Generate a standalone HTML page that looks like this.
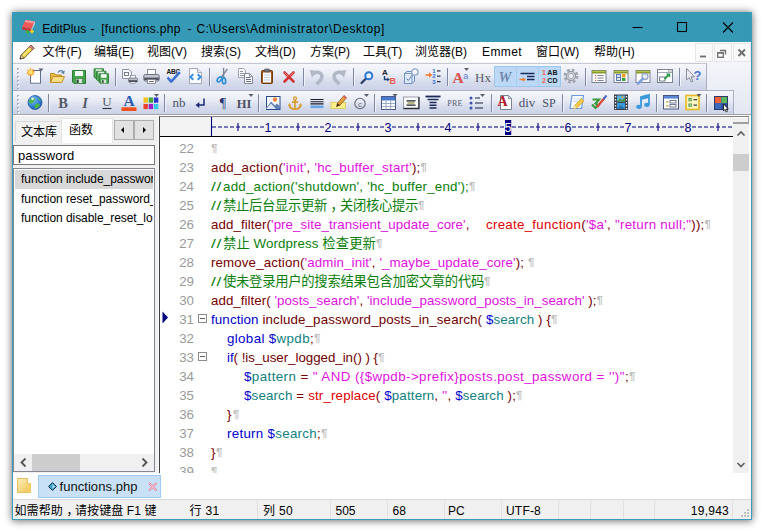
<!DOCTYPE html>
<html lang="zh-CN"><head><meta charset="utf-8"><title>EditPlus</title>
<style>
*{box-sizing:border-box;margin:0;padding:0}
html,body{width:764px;height:532px;overflow:hidden;background:#fff}
body{position:relative;font-family:"Liberation Sans","Noto Sans CJK SC",sans-serif;font-size:12px;color:#000}
.abs{position:absolute}
svg{position:absolute;overflow:visible}
#win{position:absolute;left:12px;top:12px;width:740px;height:508px;background:#f0f0f0;box-shadow:0 0 8px 0 rgba(0,0,0,.46),0 2px 7px rgba(0,0,0,.2)}
#frame{position:absolute;left:0;top:0;width:740px;height:508px;border:1px solid #3a9cb8;border-top:none;pointer-events:none}
#title{position:absolute;left:0;top:0;width:740px;height:30px;background:#369ab6}
#title .t{position:absolute;top:7.600px;font-size:12px;line-height:18px;white-space:pre;color:#000}
#menu{position:absolute;left:1px;top:30px;width:738px;height:20px;background:#fff}
#menu span{position:absolute;top:1px;line-height:18px;font-size:12px;white-space:pre}
.mdi{position:absolute;top:1px;width:18px;height:19px;background:#f9f9f9;border:1px solid #e6e6e6}
#rebar{position:absolute;left:1px;top:50px;width:738px;height:54px;background:linear-gradient(#f4f5fa,#e4e7f2);border-bottom:1px solid #fff}
#rebar:after{content:"";position:absolute;left:0;bottom:0;width:738px;height:1px;background:#a3a3a3}
.tb{position:absolute;left:1px;background:linear-gradient(#f6f7fb,#e9ecf5 40%,#d6dbec 70%,#ccd3e7)}
#tb1{top:51px;height:27px;width:694px;border-top:1px solid #c5c8d2;border-right:1px solid #a9afc4}
#tb2{top:78px;height:24px;width:721px;border-top:1px solid #aab1c8;border-right:1px solid #a9afc4}
.sep{position:absolute;width:2px;border-left:1px solid #7f89a4;border-right:1px solid #f1f3f9}
#left{position:absolute;left:1px;top:104px;width:145px;height:357px;background:#f0f0f0}
#editor{position:absolute;left:147px;top:104px;width:590px;height:357px;background:#fff;overflow:hidden}
#editor{border-left:1px solid #404040;border-top:1px solid #828282}
#ruler{position:absolute;left:0;top:0;width:573px;height:20px;background:#f3f3f3;border-bottom:1px solid #000}
.ln{position:absolute;left:0;width:34px;text-align:right;color:#9a9a9a;font-size:13.33px;line-height:19px}
.cl{position:absolute;font-size:13.33px;line-height:19px;white-space:pre}
.c3{color:#0a800a;display:inline-block;transform:translateX(3.5px)}.c2{color:#0a800a;display:inline-block;transform:scaleX(1.3);transform-origin:0 50%;margin-right:3.4px;letter-spacing:.6px}.k{color:#0000d0}.f{color:#780000}.s{color:#e010e0}.c{color:#0a800a}.v{color:#108080}.r{color:#e00000}.o{color:#780000}.n{color:#700000}
.p{color:#c0c0c0;font-size:11.5px;font-weight:bold;letter-spacing:-1.5px;font-family:"Liberation Sans",sans-serif;position:relative;top:-1.5px}
.lt{font-size:12px;line-height:20px;white-space:pre}
.spin{width:20px;height:20px;background:#e1e1e1;border:1px solid #adadad}
.spin i{position:absolute;top:6px;width:0;height:0;border-top:3px solid transparent;border-bottom:3px solid transparent}
.fold{position:absolute;width:9px;height:9px;border:1px solid #8c8c8c;background:#fff}
.fold:after{content:"";position:absolute;left:1px;top:3px;width:5px;height:1px;background:#606060}
#tabs{position:absolute;left:1px;top:461px;width:738px;height:26px;background:#fff}
#status{position:absolute;left:1px;top:487px;width:738px;height:20px;background:#f0f0f0;border-top:1px solid #d9d9d9}
.ss{position:absolute;top:1px;width:1px;height:18px;background:#e0e0e0}
#status span{position:absolute;top:2px;line-height:18px;font-size:12px;white-space:pre}
</style></head><body>
<div id="win">
 <div id="title"><span class="t" style="left:30.200px">EditPlus</span><span class="t" style="left:78.500px">-</span><span class="t" style="left:89.200px;letter-spacing:.35px">[functions.php</span><span class="t" style="left:175.500px">-</span><span class="t" style="left:184.400px;letter-spacing:.36px">C:\Users</span><span class="t" style="left:234px;letter-spacing:.64px">\Administrator</span><span class="t" style="left:317px;letter-spacing:.59px">\Desktop]</span>
  <svg width="16" height="16" viewBox="0 0 16 16" style="left:9px;top:7px"><path d="M4.5 1L14 2.5L10.5 10L1 8Z" fill="#ee5a5a"/><path d="M4.5 1L14 2.5L13 4.5L3.6 3Z" fill="#f79a9a"/><path d="M1 8L10.5 10L10 12.5L1 10.5Z" fill="#c83a3a"/><path d="M14 2.5L10.5 10L10 12.5L13.8 5Z" fill="#e8e4ea"/><path d="M6.5 11v4M4.5 13h4" stroke="#3fae3f" stroke-width="1.5"/><path d="M11 10.5v4M9 12.5h4" stroke="#f2d21e" stroke-width="1.5"/></svg>
  <svg width="120" height="30" style="left:615px;top:0"><path d="M5.5 15.5h10" stroke="#000" stroke-width="1.1"/><rect x="50.500" y="10.500" width="9" height="9" fill="none" stroke="#000" stroke-width="1.1"/><path d="M96 10.500l10 10M106 10.500l-10 10" stroke="#000" stroke-width="1.1"/></svg>
 </div>
 <div id="menu">
  <svg width="17" height="16" viewBox="0 0 17 16" style="left:6px;top:2px"><path d="M1 15L2.2 11L12 1.2L15 4.2L5.2 14Z" fill="#f5d94a" stroke="#5a4a2a" stroke-width=".9"/><path d="M12 1.200L15 4.200L13.400 5.800L10.400 2.800Z" fill="#e8829a" stroke="#5a4a2a" stroke-width=".7"/><path d="M1 15L2.200 11L5.200 14Z" fill="#f0d8b0" stroke="#5a4a2a" stroke-width=".7"/><path d="M1 15l.6-1.800 1.300 1.300z" fill="#222"/><path d="M3.500 12.300L11.500 4.300" stroke="#fbf0a0" stroke-width="1"/></svg>
  <span id="m1" style="left:29.500px">文件(F)</span><span id="m2" style="left:81px">编辑(E)</span><span id="m3" style="left:134px">视图(V)</span><span id="m4" style="left:188px">搜索(S)</span><span id="m5" style="left:242px">文档(D)</span><span id="m6" style="left:297px">方案(P)</span><span id="m7" style="left:350px">工具(T)</span><span id="m8" style="left:402px">浏览器(B)</span><span id="m9" style="left:469px;letter-spacing:.4px">Emmet</span><span id="m10" style="left:523px">窗口(W)</span><span id="m11" style="left:581px">帮助(H)</span>
  <div class="mdi" style="left:682px"></div><div class="mdi" style="left:701px"></div><div class="mdi" style="left:720px"></div>
  <svg width="57" height="19" style="left:682px;top:1px"><path d="M5 13.500h6" stroke="#6e6e6e" stroke-width="1.800"/><path d="M25 7.500h5.500v4" fill="none" stroke="#6e6e6e" stroke-width="1.300"/><rect x="22.700" y="9.700" width="5.600" height="4.600" fill="#fbfbfb" stroke="#6e6e6e" stroke-width="1.300"/><path d="M23 9.800h5" stroke="#6e6e6e" stroke-width="1.600"/><path d="M43.500 6.500l6.500 6.500M50 6.500l-6.500 6.500" stroke="#6e6e6e" stroke-width="1.900"/></svg>
 </div>
 <div id="rebar"></div>
 <div class="tb" id="tb1">
<svg width="4" height="26" style="left:4px;top:1px"><rect x="0" y="3" width="2" height="2" fill="#a4acc6"/><rect x="1" y="4" width="1.6" height="1.6" fill="#fff" opacity=".9"/><rect x="0" y="7" width="2" height="2" fill="#a4acc6"/><rect x="1" y="8" width="1.6" height="1.6" fill="#fff" opacity=".9"/><rect x="0" y="11" width="2" height="2" fill="#a4acc6"/><rect x="1" y="12" width="1.6" height="1.6" fill="#fff" opacity=".9"/><rect x="0" y="15" width="2" height="2" fill="#a4acc6"/><rect x="1" y="16" width="1.6" height="1.6" fill="#fff" opacity=".9"/><rect x="0" y="19" width="2" height="2" fill="#a4acc6"/><rect x="1" y="20" width="1.6" height="1.6" fill="#fff" opacity=".9"/><rect x="0" y="23" width="2" height="2" fill="#a4acc6"/><rect x="1" y="24" width="1.6" height="1.6" fill="#fff" opacity=".9"/></svg>
<div class="abs" style="left:481px;top:2px;width:67px;height:21px;background:#bcd8f6;border:1px solid #9cc7ee"></div><div class="abs" style="left:503px;top:3px;width:1px;height:19px;background:#a9cff0"></div><div class="abs" style="left:525px;top:3px;width:1px;height:19px;background:#a9cff0"></div>
<svg width="16" height="16" viewBox="0 0 16 16" style="left:14px;top:4px"><path d="M3.5 2.5H13.5V15.5H3.5Z" fill="#fff" stroke="#64708c"/><path d="M4 15h9" stroke="#aeb6c8"/>
<path d="M3.5 -0.5l1 2.4 2.4-1.4-0.9 2.6 2.6 0.6-2.4 1.3 1.2 2.3-2.5-0.8-0.6 2.6-1.3-2.3-2.2 1.5 0.7-2.6-2.6-0.3 2.2-1.6-1.5-2.1 2.6 0.5z" fill="#f6a623"/><circle cx="3.6" cy="4.2" r="2.1" fill="#ffe27a"/><path d="M11.5 0.5h5l-2.5 3z" fill="#5a6070"/></svg>
<svg width="16" height="16" viewBox="0 0 16 16" style="left:36px;top:4px"><path d="M1.5 14.5V5.5H5.5L7 7H12.5V9" fill="#e9b94b" stroke="#b98a20"/><path d="M1.5 14.5L4 8.5H15.5L12.8 14.5Z" fill="#f9dc84" stroke="#c3932a"/>
<path d="M9 4.5C10.5 2 13.5 2 14.5 4.5" fill="none" stroke="#5d7fa8" stroke-width="1.4"/><path d="M15.8 2.5L15 6.2 12 4.6Z" fill="#5d7fa8"/></svg>
<svg width="16" height="16" viewBox="0 0 16 16" style="left:58px;top:4px"><path d="M1.5 2.5H14.5V15.5H3L1.5 14Z" fill="#45a34c" stroke="#2b7b33"/><rect x="4" y="3" width="8" height="5" fill="#f4faf4"/><rect x="4.5" y="10.5" width="7" height="5" fill="#d7e6d8" stroke="#2b7b33" stroke-width=".6"/><rect x="5.5" y="11.5" width="2.2" height="3.5" fill="#2a4a30"/></svg>
<svg width="16" height="16" viewBox="0 0 16 16" style="left:80px;top:4px"><g transform="translate(0,-1) scale(.72)"><path d="M1.5 2.5H14.5V15.5H3L1.5 14Z" fill="#58ad5e" stroke="#2b7b33" stroke-width="1.3"/><rect x="4" y="3" width="8" height="5" fill="#e4f2e4"/></g>
<g transform="translate(2.5,1.5) scale(.72)"><path d="M1.5 2.5H14.5V15.5H3L1.5 14Z" fill="#58ad5e" stroke="#2b7b33" stroke-width="1.3"/><rect x="4" y="3" width="8" height="5" fill="#e4f2e4"/></g>
<g transform="translate(5,4) scale(.72)"><path d="M1.5 2.5H14.5V15.5H3L1.5 14Z" fill="#45a34c" stroke="#2b7b33" stroke-width="1.3"/><rect x="4" y="3" width="8" height="5" fill="#f4faf4"/><rect x="4.5" y="10.5" width="7" height="5" fill="#d7e6d8"/><rect x="5.5" y="11.5" width="2.4" height="3.5" fill="#2a4a30"/></g></svg>
<i class="sep" style="left:101.5px;top:4px;height:18px"></i>
<svg width="16" height="16" viewBox="0 0 16 16" style="left:108px;top:4px"><path d="M1.5 1.5H8L10.5 4V10.5H1.5Z" fill="#f8f9fb" stroke="#8a93a8"/><rect x="3.5" y="4.5" width="4" height="3" fill="#fff" stroke="#6a7288" stroke-width=".9"/>
<rect x="9.5" y="7.5" width="5" height="3" fill="#fff" stroke="#8a8f9c" stroke-width=".8"/><rect x="7.5" y="10" width="9" height="4" rx=".8" fill="#b9bec9" stroke="#6c7280" stroke-width=".8"/><rect x="8" y="12.3" width="8" height="1.7" fill="#3c4048"/><rect x="9.5" y="14" width="5" height="1.5" fill="#fff" stroke="#8a8f9c" stroke-width=".6"/></svg>
<svg width="16" height="16" viewBox="0 0 16 16" style="left:130px;top:4px"><rect x="4.5" y="1.5" width="8" height="6" fill="#fff" stroke="#8a8f9c"/><rect x="0.8" y="6.5" width="15.4" height="6.5" rx="1.5" fill="#c3c7d0" stroke="#6c7280"/><rect x="1.2" y="9.6" width="14.6" height="2.4" fill="#50545e"/><rect x="4.5" y="11.5" width="8" height="4" fill="#fff" stroke="#777c88" stroke-width=".8"/><path d="M6 13.5h5" stroke="#555" stroke-width=".8"/></svg>
<svg width="16" height="16" viewBox="0 0 16 16" style="left:152px;top:4px"><text x="8.3" y="5.8" text-anchor="middle" font-family="Liberation Sans, sans-serif" font-size="6.6" font-weight="bold" fill="#111" letter-spacing="-.2">ABC</text><path d="M2.5 9.5L6.2 13.6L14.8 4.2" fill="none" stroke="#3d6fd0" stroke-width="2.6" stroke-linejoin="round"/></svg>
<svg width="16" height="16" viewBox="0 0 16 16" style="left:174px;top:4px"><path d="M2.5 0.5H10.5L14.5 4.5V15.5H2.5Z" fill="#fbfcfe" stroke="#a0a8ba"/><path d="M10.5 0.5V4.5H14.5" fill="#e6eaf2" stroke="#a0a8ba"/><path d="M6.3 6.2L3.4 9L6.3 11.8M10.7 6.2L13.6 9L10.7 11.8" fill="none" stroke="#3b8fe0" stroke-width="2"/></svg>
<i class="sep" style="left:195.5px;top:4px;height:18px"></i>
<svg width="16" height="16" viewBox="0 0 16 16" style="left:202px;top:4px"><g transform="rotate(18 8 8)"><path d="M10 0L6.800 9.500M6 0L9.200 9.500" stroke="#7a8496" stroke-width="1.400"/><ellipse cx="5.600" cy="12.300" rx="1.700" ry="2.900" fill="none" stroke="#2f8fd8" stroke-width="1.700" transform="rotate(22 5.600 12.300)"/><ellipse cx="10.400" cy="12.300" rx="1.700" ry="2.900" fill="none" stroke="#2f8fd8" stroke-width="1.700" transform="rotate(-22 10.400 12.300)"/></g></svg>
<svg width="16" height="16" viewBox="0 0 16 16" style="left:224px;top:4px"><path d="M1.5 0.5H6.5L8.5 2.5V9.5H1.5Z" fill="#fdfdfe" stroke="#9aa2b4"/><path d="M3 3.500h3M3 5.500h4M3 7.500h4" stroke="#7f889c" stroke-width=".9"/><path d="M7.5 5.5H12.5L15.5 8.5V15.5H7.5Z" fill="#fdfdfe" stroke="#7f889c"/><path d="M12.5 5.5V8.5H15.5" fill="none" stroke="#7f889c" stroke-width=".8"/><path d="M9 9.5h4.5M9 11.5h5M9 13.5h5" stroke="#55607a" stroke-width=".9"/></svg>
<svg width="16" height="16" viewBox="0 0 16 16" style="left:246px;top:4px"><rect x="2.5" y="2.5" width="11" height="13" rx="1" fill="#9a5a1e" stroke="#6e3d10"/><rect x="4" y="4.5" width="8" height="10" fill="#fcfcfc"/><rect x="5.5" y="1" width="5" height="2.8" rx=".8" fill="#70757f" stroke="#44484f" stroke-width=".6"/><path d="M5 7h6M5 9.500h6M5 12h6" stroke="#b9c6e0" stroke-width=".9"/></svg>
<svg width="16" height="16" viewBox="0 0 16 16" style="left:268px;top:4px"><path d="M3.500 4.500L12.500 13.500M12.500 4.500L3.500 13.500" stroke="#d23434" stroke-width="2.600" stroke-linecap="round"/><path d="M3.700 4.700L7 8M12.300 4.700L9.400 7.600" stroke="#f08a8a" stroke-width="1" stroke-linecap="round"/></svg>
<i class="sep" style="left:289.5px;top:4px;height:18px"></i>
<svg width="16" height="16" viewBox="0 0 16 16" style="left:296px;top:4px"><path d="M0.500 2L9 3L3 9.500Z" fill="#b2b8c6"/><path d="M5 5C9.500 3 13.500 5.500 12.800 9.500C12.300 12.300 10 14 7.500 16" fill="none" stroke="#b2b8c6" stroke-width="3.600"/></svg>
<svg width="16" height="16" viewBox="0 0 16 16" style="left:318px;top:4px"><path d="M15.500 2L7 3L13 9.500Z" fill="#b2b8c6"/><path d="M11 5C6.500 3 2.500 5.500 3.200 9.500C3.700 12.300 6 14 8.500 16" fill="none" stroke="#b2b8c6" stroke-width="3.600"/></svg>
<i class="sep" style="left:339.5px;top:4px;height:18px"></i>
<svg width="16" height="16" viewBox="0 0 16 16" style="left:346px;top:4px"><path d="M2.500 15L6.800 10.700" stroke="#2b3f66" stroke-width="2.300" stroke-linecap="round"/><circle cx="9.800" cy="7.700" r="3.500" fill="#e8f2fc" stroke="#2e78d2" stroke-width="2"/></svg>
<svg width="16" height="16" viewBox="0 0 16 16" style="left:368px;top:4px"><text x="1" y="7" font-family="Liberation Sans, sans-serif" font-size="8" font-weight="bold" fill="#1c2430">A</text><text x="8.5" y="15.5" font-family="Liberation Sans, sans-serif" font-size="9" font-weight="bold" fill="#f05a4a">B</text><path d="M3.5 8V11.5H7" fill="none" stroke="#1d3f7a" stroke-width="1.4"/><path d="M6.3 9.5L8.8 11.5L6.3 13.5Z" fill="#1d3f7a"/></svg>
<svg width="16" height="16" viewBox="0 0 16 16" style="left:390px;top:4px"><path d="M1.5 5.5L4 3.5H11.5V13L9 15.5H1.5Z" fill="#dfe9f7" stroke="#6d8cc0"/><path d="M1.5 5.5H9V15.5M9 5.5L11.5 3.5" fill="none" stroke="#6d8cc0" stroke-width=".9"/><path d="M3.5 10.5l1.8 2 3-4" fill="none" stroke="#5c7fb8" stroke-width="1"/><circle cx="12" cy="4" r="3.2" fill="#f4f8fd" stroke="#8fa6cc" stroke-width="1.3"/><path d="M10 6.5L7.5 10" stroke="#8fa6cc" stroke-width="1.5"/></svg>
<svg width="16" height="16" viewBox="0 0 16 16" style="left:412px;top:4px"><path d="M0.5 7H5" stroke="#f07a28" stroke-width="1.6"/><path d="M4 4.2L7.2 7L4 9.8Z" fill="#f07a28"/><text x="7.2" y="5" font-family="Liberation Sans, sans-serif" font-size="6" font-weight="bold" fill="#2f6fd0">1</text><text x="7.2" y="10.4" font-family="Liberation Sans, sans-serif" font-size="6" font-weight="bold" fill="#2f6fd0">2</text><text x="7.2" y="15.8" font-family="Liberation Sans, sans-serif" font-size="6" font-weight="bold" fill="#2f6fd0">3</text><path d="M12 2.8h3.5M12 8.2h3.5M12 13.6h3.5" stroke="#2b3550" stroke-width="1.2"/></svg>
<i class="sep" style="left:433.5px;top:4px;height:18px"></i>
<svg width="16" height="16" viewBox="0 0 16 16" style="left:440px;top:4px"><text x="-0.5" y="15" font-family="Liberation Serif, serif" font-size="15.500" font-weight="bold" fill="#d9534f">A</text><text x="10.200" y="10.500" font-family="Liberation Sans, sans-serif" font-size="9" fill="#5b7fd0">a</text><path d="M11 0h5l-2.5 3z" fill="#5a6070"/></svg>
<svg width="16" height="16" viewBox="0 0 16 16" style="left:462px;top:4px"><text x="8" y="13.5" text-anchor="middle" font-family="Liberation Serif, serif" font-size="13" fill="#585e6c">Hx</text></svg>
<svg width="16" height="16" viewBox="0 0 16 16" style="left:484px;top:4px"><text x="8" y="13.5" text-anchor="middle" font-family="Liberation Serif, serif" font-size="14.500" font-style="italic" font-weight="bold" fill="#7189ac">W</text></svg>
<svg width="16" height="16" viewBox="0 0 16 16" style="left:506px;top:4px"><path d="M1.500 5.500h14M8 8.500h7.500M8 11.500h7.500" stroke="#1c2a5a" stroke-width="1.300"/><path d="M0.500 11.500H4.500" stroke="#f07a28" stroke-width="1.400"/><path d="M3.800 9.200L6.800 11.500L3.800 13.800Z" fill="#f07a28"/></svg>
<svg width="16" height="16" viewBox="0 0 16 16" style="left:528px;top:4px"><text x="1" y="7.2" font-family="Liberation Sans, sans-serif" font-size="7" font-weight="bold" fill="#f0604a">1</text><text x="1" y="14.8" font-family="Liberation Sans, sans-serif" font-size="7" font-weight="bold" fill="#f0604a">2</text><text x="6.2" y="7.2" font-family="Liberation Sans, sans-serif" font-size="7" font-weight="bold" fill="#101820" letter-spacing=".2">AB</text><text x="6.2" y="14.8" font-family="Liberation Sans, sans-serif" font-size="7" font-weight="bold" fill="#101820" letter-spacing=".2">CD</text></svg>
<svg width="16" height="16" viewBox="0 0 16 16" style="left:550px;top:4px"><circle cx="8" cy="8" r="5.8" fill="none" stroke="#a3a8b4" stroke-width="3.4" stroke-dasharray="2.6 1.95"/><circle cx="8" cy="8" r="4.6" fill="#c9cdd6" stroke="#9196a2" stroke-width="1"/><circle cx="8" cy="8" r="2.6" fill="#eef0f6" stroke="#9da2ae" stroke-width=".8"/></svg>
<i class="sep" style="left:571.5px;top:4px;height:18px"></i>
<svg width="16" height="16" viewBox="0 0 16 16" style="left:578px;top:4px"><rect x="1" y="2.500" width="14" height="12" fill="#fdfdfd" stroke="#7d8496"/><rect x="1" y="2.500" width="14" height="3" fill="#8b9a2c"/><rect x="1.500" y="3" width="13" height="1" fill="#b5c252"/><path d="M6.500 7.500h6M6.500 10h6M6.500 12.500h6" stroke="#7c8294" stroke-width="1"/><path d="M4 7.500h1.200M4 10h1.200M4 12.500h1.200" stroke="#e0503c" stroke-width="1.200"/></svg>
<svg width="16" height="16" viewBox="0 0 16 16" style="left:600px;top:4px"><rect x="1" y="2.500" width="14" height="12" fill="#fdfdfd" stroke="#7d8496"/><rect x="1" y="2.500" width="14" height="3" fill="#8b9a2c"/><rect x="1.500" y="3" width="13" height="1" fill="#b5c252"/><rect x="3.5" y="6.5" width="4" height="6" fill="#dfe7f5" stroke="#5877b0" stroke-width="1"/><path d="M3.5 9.5h4" stroke="#5877b0"/><rect x="9" y="6" width="3.5" height="3.2" fill="#f0a020"/><rect x="9" y="9.8" width="3.5" height="3.2" fill="#3ca040"/></svg>
<svg width="16" height="16" viewBox="0 0 16 16" style="left:622px;top:4px"><rect x="1" y="2.500" width="14" height="12" fill="#fdfdfd" stroke="#7d8496"/><rect x="1" y="2.500" width="14" height="3" fill="#8b9a2c"/><rect x="1.500" y="3" width="13" height="1" fill="#b5c252"/><circle cx="10" cy="8.5" r="3" fill="#e8eef8" stroke="#9aa8c6" stroke-width="1.4"/><path d="M8 10.8L3 15.5" stroke="#7f9fd8" stroke-width="2.6" stroke-linecap="round"/></svg>
<svg width="16" height="16" viewBox="0 0 16 16" style="left:644px;top:4px"><rect x="0.5" y="1.5" width="15" height="13" fill="#fdfdfd" stroke="#7d8496"/><path d="M1 4.5h14" stroke="#8a90a0" stroke-width=".8"/><path d="M11 3h.8M12.6 3h.8M14 3h.5" stroke="#555" stroke-width="1"/><rect x="2.5" y="9" width="5.5" height="4" fill="#fff" stroke="#6c7388" stroke-width=".9"/><path d="M7.5 11L12 6.5" stroke="#2f9a48" stroke-width="2"/><path d="M9 5.5H13.2V9.7Z" fill="#2f9a48"/></svg>
<i class="sep" style="left:665.5px;top:4px;height:18px"></i>
<svg width="16" height="16" viewBox="0 0 16 16" style="left:672px;top:4px"><path d="M1.5 0.5V12L4.3 9.5L6.3 14L8 13.2L6 8.8H9.5Z" fill="#eceef4" stroke="#858b9a" stroke-width="1"/><text x="8.5" y="12" font-family="Liberation Sans, sans-serif" font-size="13" font-weight="bold" fill="#4a74d0">?</text></svg>
 </div>
 <div class="tb" id="tb2">
<svg width="4" height="26" style="left:4px;top:1px"><rect x="0" y="3" width="2" height="2" fill="#a4acc6"/><rect x="1" y="4" width="1.6" height="1.6" fill="#fff" opacity=".9"/><rect x="0" y="7" width="2" height="2" fill="#a4acc6"/><rect x="1" y="8" width="1.6" height="1.6" fill="#fff" opacity=".9"/><rect x="0" y="11" width="2" height="2" fill="#a4acc6"/><rect x="1" y="12" width="1.6" height="1.6" fill="#fff" opacity=".9"/><rect x="0" y="15" width="2" height="2" fill="#a4acc6"/><rect x="1" y="16" width="1.6" height="1.6" fill="#fff" opacity=".9"/><rect x="0" y="19" width="2" height="2" fill="#a4acc6"/><rect x="1" y="20" width="1.6" height="1.6" fill="#fff" opacity=".9"/></svg>

<svg width="16" height="16" viewBox="0 0 16 16" style="left:14px;top:3px"><defs><radialGradient id="gg" cx=".35" cy=".3" r=".8"><stop offset="0" stop-color="#7fc4f8"/><stop offset=".6" stop-color="#2f7fd6"/><stop offset="1" stop-color="#1b4fa0"/></radialGradient></defs><circle cx="8" cy="8.5" r="7" fill="url(#gg)" stroke="#2a5aa8" stroke-width=".8"/><path d="M3 5.5C5 3 7.5 3.5 8 5C8.5 6.5 6.5 7 6 8.5C5.5 10 3.5 9.5 2 8.5C1.8 7.5 2.2 6.5 3 5.5Z" fill="#4cb648"/><path d="M8.5 10C10 9 12.5 9.5 13 11C12 13.5 10 14.5 8.5 14.5C7 13 7.5 11 8.5 10Z" fill="#4cb648"/><path d="M11 3.5C12.5 4 13.8 5.5 14 7C13 7 11.5 6 11 3.5Z" fill="#4cb648"/><circle cx="5.6" cy="4.8" r="1.3" fill="#fff" opacity=".85"/></svg>
<i class="sep" style="left:35.0px;top:3px;height:18px"></i>
<svg width="16" height="16" viewBox="0 0 16 16" style="left:42px;top:3px"><text x="8" y="13.5" text-anchor="middle" font-family="Liberation Serif, serif" font-size="14.5" fill="#565b68" font-weight="bold">B</text></svg>
<svg width="16" height="16" viewBox="0 0 16 16" style="left:64px;top:3px"><text x="8" y="13.5" text-anchor="middle" font-family="Liberation Serif, serif" font-size="14.5" fill="#565b68" font-weight="bold" font-style="italic">I</text></svg>
<svg width="16" height="16" viewBox="0 0 16 16" style="left:86px;top:3px"><text x="8" y="12.3" text-anchor="middle" font-family="Liberation Serif, serif" font-size="13" fill="#565b68" >U</text><path d="M3.500 14.500h9" stroke="#2a2e3a" stroke-width="1.100"/></svg>
<svg width="16" height="16" viewBox="0 0 16 16" style="left:108px;top:3px"><text x="8" y="12.3" text-anchor="middle" font-family="Liberation Serif, serif" font-size="15.5" fill="#2f5fb0" font-weight="bold">A</text><rect x="0.500" y="13.300" width="15" height="3.700" fill="#f0501e"/></svg>
<svg width="16" height="16" viewBox="0 0 16 16" style="left:130px;top:3px"><g transform="translate(0.500,1.500)"><rect x="0" y="2" width="4.4" height="5.2" fill="#f2c21a"/><rect x="5.2" y="2" width="4.4" height="5.2" fill="#3aa83a"/><rect x="10.4" y="2" width="4.4" height="5.2" fill="#2a32c8"/><rect x="0" y="8.4" width="4.4" height="5.2" fill="#e8402a"/><rect x="5.2" y="8.4" width="4.4" height="5.2" fill="#9a22c8"/><rect x="10.4" y="8.4" width="4.4" height="5.2" fill="#32c8e8"/></g><path d="M11 0h5l-2.5 3z" fill="#5a6070"/></svg>
<i class="sep" style="left:151.0px;top:3px;height:18px"></i>
<svg width="16" height="16" viewBox="0 0 16 16" style="left:158px;top:3px"><text x="8" y="13" text-anchor="middle" font-family="Liberation Serif, serif" font-size="13" fill="#4a5068" >nb</text></svg>
<svg width="16" height="16" viewBox="0 0 16 16" style="left:180px;top:3px"><path d="M11 4.500V11H5" fill="none" stroke="#1e2a78" stroke-width="1.500"/><path d="M6.300 8L2.500 11L6.300 14Z" fill="#1e2a78"/></svg>
<svg width="16" height="16" viewBox="0 0 16 16" style="left:202px;top:3px"><text x="8" y="13.5" text-anchor="middle" font-family="Liberation Serif, serif" font-size="14" fill="#2a3572" >¶</text></svg>
<svg width="16" height="16" viewBox="0 0 16 16" style="left:224px;top:3px"><text x="7" y="14" text-anchor="middle" font-family="Liberation Serif, serif" font-size="12.5" fill="#4c5160" font-weight="bold">HI</text><path d="M11.5 0h5l-2.5 3z" fill="#5a6070"/></svg>
<i class="sep" style="left:245.0px;top:3px;height:18px"></i>
<svg width="16" height="16" viewBox="0 0 16 16" style="left:252px;top:3px"><rect x="1.500" y="2.500" width="13.500" height="13" fill="#f4f8fd" stroke="#2a4a8a"/><circle cx="10" cy="5.5" r="2.2" fill="#f08a3a"/><path d="M1 14.5L6 7.5L10 11.5L12 9.5L15 12.5V15H1Z" fill="#5f7fb8"/><path d="M1 15L6 9.5L11 15Z" fill="#dfe7f4"/></svg>
<svg width="16" height="16" viewBox="0 0 16 16" style="left:274px;top:3px"><g transform="translate(0.800,1.800) scale(.9)"><circle cx="8" cy="3" r="1.700" fill="none" stroke="#dca040" stroke-width="1.500"/><path d="M8 4.5V14.5M4.5 7h7" stroke="#d89a30" stroke-width="1.8"/><path d="M1.5 9.5C2 13 5 14.8 8 14.8C11 14.8 14 13 14.5 9.5" fill="none" stroke="#d89a30" stroke-width="2"/><path d="M0.500 11.500L1.500 8L4 10.500ZM15.500 11.500L14.500 8L12 10.500Z" fill="#dca040"/></g></svg>
<svg width="16" height="16" viewBox="0 0 16 16" style="left:296px;top:3px"><path d="M1.500 5.500h13M1.500 7.700h13M1.500 9.900h13" stroke="#1a1e2a" stroke-width="1.100"/><rect x="1.500" y="11.500" width="13" height="2.600" fill="#6aa4e4"/></svg>
<svg width="16" height="16" viewBox="0 0 16 16" style="left:318px;top:3px"><rect x="0" y="8.5" width="14.5" height="6" fill="#fbf08a" stroke="#d8c850" stroke-width=".8"/><path d="M5.5 12.5L6.5 9.2L13 1.5L15.5 3.8L9 11.2Z" fill="#e8a03a" stroke="#7a4a1a" stroke-width=".7"/><path d="M13 1.5L15.5 3.8L14.4 5L12 2.7Z" fill="#e05a5a"/><path d="M5.5 12.5L6.5 9.2L9 11.2Z" fill="#3a2a1a"/></svg>
<svg width="16" height="16" viewBox="0 0 16 16" style="left:340px;top:3px"><circle cx="7" cy="9.5" r="5.2" fill="none" stroke="#666b78" stroke-width="1.1"/><text x="7" y="12.5" text-anchor="middle" font-family="Liberation Sans, sans-serif" font-size="8" fill="#666b78">c</text><path d="M11 0h5l-2.5 3z" fill="#5a6070"/></svg>
<i class="sep" style="left:361.0px;top:3px;height:18px"></i>
<svg width="16" height="16" viewBox="0 0 16 16" style="left:368px;top:3px"><rect x="0.5" y="2.5" width="14" height="13" fill="#fff" stroke="#4a5a8a"/><rect x="1" y="3" width="13" height="3.5" fill="#4a7ad0"/><path d="M1 9.5h13M1 12.5h13M5 6.5v9M9.7 6.5v9" stroke="#8fa0c0" stroke-width=".9"/><path d="M11.5 0h5l-2.5 3z" fill="#5a6070"/></svg>
<svg width="16" height="16" viewBox="0 0 16 16" style="left:390px;top:3px"><rect x="0.500" y="3" width="15" height="11.500" fill="#fcfcfa" stroke="#9a9eaa" stroke-width="1"/><path d="M0.500 14.500h15.500V3" fill="none" stroke="#2a2e3a" stroke-width="1.300"/><path d="M3.500 6.800h9M3.500 11.200h9" stroke="#1a1e2a" stroke-width="1.200"/><path d="M4.500 9h7" stroke="#8a8a2a" stroke-width="1.200"/></svg>
<svg width="16" height="16" viewBox="0 0 16 16" style="left:412px;top:3px"><path d="M0.5 2.5h15" stroke="#1c2a5a" stroke-width="1.8"/><path d="M2.5 5.5h11" stroke="#1c2a5a" stroke-width="1.5"/><path d="M4.5 8.5h7M4.5 11.2h7M4.5 14h7" stroke="#1c2a5a" stroke-width="1.4"/></svg>
<svg width="16" height="16" viewBox="0 0 16 16" style="left:434px;top:3px"><text x="8" y="11.5" text-anchor="middle" font-family="Liberation Serif, serif" font-size="8" fill="#5a6074" letter-spacing=".2">PRE</text></svg>
<svg width="16" height="16" viewBox="0 0 16 16" style="left:456px;top:3px"><circle cx="2" cy="4" r="1.5" fill="#3a52b0"/><circle cx="2" cy="9" r="1.5" fill="#3a52b0"/><circle cx="2" cy="14" r="1.5" fill="#3a52b0"/><path d="M6 4h5M6 9h8M6 14h8" stroke="#1c2440" stroke-width="1.100"/><path d="M11 0h5l-2.5 3z" fill="#5a6070"/></svg>
<i class="sep" style="left:477.5px;top:3px;height:18px"></i>
<svg width="16" height="16" viewBox="0 0 16 16" style="left:484px;top:3px"><path d="M3.5 1.5H11.5L14.5 4.5V15.5H3.5Z" fill="#fdfdfe" stroke="#7a8296"/><path d="M11.5 1.5V4.5H14.5" fill="none" stroke="#7a8296" stroke-width=".8"/><text x="5.5" y="12" text-anchor="middle" font-family="Liberation Serif, serif" font-size="14" font-weight="bold" fill="#b0182a">A</text></svg>
<svg width="16" height="16" viewBox="0 0 16 16" style="left:506px;top:3px"><text x="8" y="13" text-anchor="middle" font-family="Liberation Serif, serif" font-size="13" fill="#4a5068" >div</text></svg>
<svg width="16" height="16" viewBox="0 0 16 16" style="left:528px;top:3px"><text x="8" y="13" text-anchor="middle" font-family="Liberation Serif, serif" font-size="12" fill="#4a5068" >SP</text></svg>
<i class="sep" style="left:549.0px;top:3px;height:18px"></i>
<svg width="16" height="16" viewBox="0 0 16 16" style="left:556px;top:3px"><path d="M3 1.5H14.5L12.5 14.5H1Z" fill="#f6f9fe" stroke="#6a9ae0" stroke-width="1.2"/><path d="M5 5h7M4.6 7.5h7" stroke="#c8d8f0" stroke-width="1"/><path d="M4.5 14.5L5.5 11.5L12.5 4.5L15 7L8 14Z" fill="#f2c84a" stroke="#c89a2a" stroke-width=".7"/><path d="M4.5 14.5L5.5 11.5L8 14Z" fill="#f8e8c0"/></svg>
<svg width="16" height="16" viewBox="0 0 16 16" style="left:578px;top:3px"><path d="M1.5 5.5H8L4.5 9.5L8 12" fill="none" stroke="#3a9a3a" stroke-width="2.2"/><path d="M1 10.5L4.5 14L8 10" fill="none" stroke="#3a9a3a" stroke-width="2.2"/><path d="M6 13L13.5 4" stroke="#d84a3a" stroke-width="2.4"/><path d="M12.5 5.2L15.5 1.5" stroke="#4a6ac8" stroke-width="2"/></svg>
<svg width="16" height="16" viewBox="0 0 16 16" style="left:600px;top:3px"><rect x="1" y="0.5" width="14" height="15.5" fill="#3a3e48"/><rect x="4" y="1.5" width="8" height="6" fill="#5ab0e0"/><rect x="4" y="8.8" width="8" height="6" fill="#3a9ad8"/><path d="M4 7.5L7 4.5L9 6L12 3.5V7.5Z" fill="#4a9a4a"/><circle cx="9.5" cy="3.2" r="1" fill="#f0a030"/><path d="M4 14.8L7.5 11.5L12 14.8Z" fill="#2a6aa8"/><path d="M2.5 2v1.4M2.5 5v1.4M2.5 8v1.4M2.5 11v1.4M2.5 14v1.2M13.5 2v1.4M13.5 5v1.4M13.5 8v1.4M13.5 11v1.4M13.5 14v1.2" stroke="#e8eaf0" stroke-width="1.4"/></svg>
<svg width="16" height="16" viewBox="0 0 16 16" style="left:622px;top:3px"><path d="M6 12.5V3L14 1V10.5" fill="none" stroke="#3a9adc" stroke-width="1.8"/><path d="M6 3L14 1V4L6 6Z" fill="#3a9adc"/><ellipse cx="4" cy="12.8" rx="2.8" ry="2.1" fill="#3a9adc"/><ellipse cx="12" cy="10.8" rx="2.8" ry="2.1" fill="#3a9adc"/></svg>
<i class="sep" style="left:643.0px;top:3px;height:18px"></i>
<svg width="16" height="16" viewBox="0 0 16 16" style="left:650px;top:3px"><rect x="0.5" y="1.5" width="15" height="13.5" fill="#fafbfe" stroke="#4a5680"/><rect x="1" y="2" width="14" height="2.6" fill="#5a88d8"/><rect x="7" y="6.5" width="6" height="2.5" fill="#fff" stroke="#6a7088" stroke-width=".9"/><rect x="7" y="10.5" width="6" height="2.5" fill="#fff" stroke="#6a7088" stroke-width=".9"/><path d="M3 7.8h2.5M3 11.8h2.5" stroke="#b8a830" stroke-width="1.3"/></svg>
<svg width="16" height="16" viewBox="0 0 16 16" style="left:672px;top:3px"><rect x="1" y="1.5" width="13" height="14" fill="#fbf6c0" stroke="#e8b820" stroke-width="1.6"/><rect x="3.5" y="4" width="3.2" height="3.2" fill="#3a8a3a"/><rect x="3.5" y="9.5" width="3.2" height="3.2" fill="#3a8a3a"/><rect x="4.4" y="4.9" width="1.4" height="1.4" fill="#e8f8d8"/><rect x="4.4" y="10.4" width="1.4" height="1.4" fill="#e8f8d8"/><path d="M8.5 5.6h3.5M8.5 11.1h3.5" stroke="#3a3e4a" stroke-width="1.2"/><path d="M11.5 0h5l-2.5 3z" fill="#5a6070"/></svg>
<i class="sep" style="left:693.0px;top:3px;height:18px"></i>
<svg width="16" height="16" viewBox="0 0 16 16" style="left:700px;top:3px"><g transform="translate(1,2)"><rect x="0.5" y="0.5" width="13" height="13" fill="#3a62a8" stroke="#2a3a6a"/><rect x="1" y="1" width="6" height="6" fill="#f0603a"/><rect x="7.5" y="1" width="5.5" height="6" fill="#5ab85a"/><rect x="1" y="7.5" width="6" height="5.5" fill="#3a6ab8"/><rect x="7.5" y="7.5" width="5.5" height="5.5" fill="#2a4a98"/><path d="M9.5 8V15L11 13.5L12.2 16L13.4 15.4L12.3 13H14.3Z" fill="#fff" stroke="#111" stroke-width=".8"/></g></svg>
 </div>
 <div id="split" class="abs" style="left:145px;top:104px;width:2px;height:357px;background:#fbfbfb"></div>
 <div class="abs" style="left:737px;top:104px;width:2px;height:357px;background:#fff"></div>
 <div id="left">
  <div class="abs" style="left:2px;top:5px;width:47px;height:21px;background:#f0f0f0;border:1px solid #d9d9d9;border-bottom:none"></div>
  <div class="abs" style="left:48px;top:2px;width:52px;height:25px;background:#fff;border:1px solid #e4e4e4;border-bottom:none"></div>
  <span class="abs lt" style="left:8px;top:6px">文本库</span>
  <span class="abs lt" style="left:56px;top:4px">函数</span>
  <div class="abs spin" style="left:101px;top:4px"><i style="border-right:3.500px solid #000;left:6px"></i></div>
  <div class="abs spin" style="left:121px;top:4px"><i style="border-left:3.500px solid #000;left:8px"></i></div>
  <div class="abs" style="left:0;top:29px;width:142px;height:20px;background:#fff;border:1px solid #7a7a7a"></div>
  <span class="abs" style="left:5px;top:31px;font-size:13px;line-height:18px;letter-spacing:.1px">password</span>
  <div class="abs" style="left:0;top:52px;width:142px;height:304px;background:#fff;border:1px solid #828790"></div>
  <div class="abs" style="left:2px;top:54px;width:138px;height:19px;background:#d8d8d8"></div>
  <div class="abs" style="left:8px;top:54px;width:132px;height:60px;overflow:hidden;white-space:pre;font-size:12px;line-height:19.5px;letter-spacing:-.05px">function include_password_posts
function reset_password_message
function disable_reset_lost_password</div>
  <div class="abs" style="left:1px;top:338px;width:140px;height:17px;background:#f0f0f0">
   <div class="abs" style="left:18px;top:0;width:48px;height:17px;background:#cdcdcd"></div>
   <svg width="140" height="17" style="left:0;top:0"><path d="M11.5 4.5 L7.5 8.5 L11.5 12.5" fill="none" stroke="#555" stroke-width="1.8"/><path d="M128.5 4.5 L132.5 8.5 L128.5 12.5" fill="none" stroke="#555" stroke-width="1.8"/></svg>
  </div>
 </div>
 <div id="editor">
  <div id="ruler"><svg width="573" height="20" style="left:0;top:0" font-family="Liberation Sans, sans-serif" font-size="12.5" fill="#000080"><rect x="345.0" y="3" width="6.2" height="15" fill="#000080"/><path d="M51.5 0V19" stroke="#000080" stroke-width="1.1"/><text x="108.0" y="14.5" text-anchor="middle">1</text><text x="168.0" y="14.5" text-anchor="middle">2</text><text x="228.0" y="14.5" text-anchor="middle">3</text><text x="288.0" y="14.5" text-anchor="middle">4</text><text x="348.0" y="14.5" text-anchor="middle" fill="#fff">5</text><text x="408.0" y="14.5" text-anchor="middle">6</text><text x="468.0" y="14.5" text-anchor="middle">7</text><text x="528.0" y="14.5" text-anchor="middle">8</text><path d="M52.0 10h4.0M58.0 10h4.0M64.0 10h4.0M70.0 10h4.0M76.0 10h4.0M78.0 6v8M82.0 10h4.0M88.0 10h4.0M94.0 10h4.0M100.0 10h4.0M112.0 10h4.0M118.0 10h4.0M124.0 10h4.0M130.0 10h4.0M136.0 10h4.0M138.0 6v8M142.0 10h4.0M148.0 10h4.0M154.0 10h4.0M160.0 10h4.0M172.0 10h4.0M178.0 10h4.0M184.0 10h4.0M190.0 10h4.0M196.0 10h4.0M198.0 6v8M202.0 10h4.0M208.0 10h4.0M214.0 10h4.0M220.0 10h4.0M232.0 10h4.0M238.0 10h4.0M244.0 10h4.0M250.0 10h4.0M256.0 10h4.0M258.0 6v8M262.0 10h4.0M268.0 10h4.0M274.0 10h4.0M280.0 10h4.0M292.0 10h4.0M298.0 10h4.0M304.0 10h4.0M310.0 10h4.0M316.0 10h4.0M318.0 6v8M322.0 10h4.0M328.0 10h4.0M334.0 10h4.0M340.0 10h4.0M352.0 10h4.0M358.0 10h4.0M364.0 10h4.0M370.0 10h4.0M376.0 10h4.0M378.0 6v8M382.0 10h4.0M388.0 10h4.0M394.0 10h4.0M400.0 10h4.0M412.0 10h4.0M418.0 10h4.0M424.0 10h4.0M430.0 10h4.0M436.0 10h4.0M438.0 6v8M442.0 10h4.0M448.0 10h4.0M454.0 10h4.0M460.0 10h4.0M472.0 10h4.0M478.0 10h4.0M484.0 10h4.0M490.0 10h4.0M496.0 10h4.0M498.0 6v8M502.0 10h4.0M508.0 10h4.0M514.0 10h4.0M520.0 10h4.0M532.0 10h4.0M538.0 10h4.0M544.0 10h4.0M550.0 10h4.0M556.0 10h4.0M558.0 6v8M562.0 10h4.0M568.0 10h4.0" stroke="#000080" stroke-width="1.1" fill="none"/></svg></div>
  <div id="code">
<div class="ln" style="top:22px">22</div>
<div class="cl" style="top:22px;left:51px;letter-spacing:0.000px"><span class="tx" id="T22"></span><span class="p">¶</span></div>
<div class="ln" style="top:41px">23</div>
<div class="cl" style="top:41px;left:51px;letter-spacing:0.220px"><span class="tx" id="T23"><span class="f">add_action</span><span class="o">(</span><span class="s">'init'</span><span class="o">, </span><span class="s">'hc_buffer_start'</span><span class="o">);</span></span><span class="p">¶</span></div>
<div class="ln" style="top:60px">24</div>
<div class="cl" style="top:60px;left:51px;letter-spacing:0.215px"><span class="tx" id="T24"><span class="c2">//</span><span class="c">add_action('shutdown', 'hc_buffer_end');</span></span><span class="p">¶</span></div>
<div class="ln" style="top:79px">25</div>
<div class="cl" style="top:79px;left:51px;letter-spacing:-0.330px"><span class="tx" id="T25"><span class="c2">//</span><span class="c">禁止后台显示更新</span><span class="c3">，</span><span class="c">关闭核心提示</span></span><span class="p">¶</span></div>
<div class="ln" style="top:98px">26</div>
<div class="cl" style="top:98px;left:51px;letter-spacing:0.067px"><span class="tx" id="T26"><span class="f">add_filter</span><span class="o">(</span><span class="s">'pre_site_transient_update_core'</span><span class="o">,</span></span></div>
<div class="cl" style="top:98px;left:326px;letter-spacing:0.273px"><span class="tx" id="T26.5"><span class="r">create_function</span><span class="o">(</span><span class="s">'$a'</span><span class="o">, </span><span class="s">"return null;"</span><span class="o">));</span></span><span class="p">¶</span></div>
<div class="ln" style="top:117px">27</div>
<div class="cl" style="top:117px;left:51px;letter-spacing:0.084px"><span class="tx" id="T27"><span class="c2">//</span><span class="c">禁止 Wordpress 检查更新</span></span><span class="p">¶</span></div>
<div class="ln" style="top:136px">28</div>
<div class="cl" style="top:136px;left:51px;letter-spacing:0.117px"><span class="tx" id="T28"><span class="f">remove_action</span><span class="o">(</span><span class="s">'admin_init'</span><span class="o">, </span><span class="s">'_maybe_update_core'</span><span class="o">); </span></span><span class="p">¶</span></div>
<div class="ln" style="top:155px">29</div>
<div class="cl" style="top:155px;left:51px;letter-spacing:-0.278px"><span class="tx" id="T29"><span class="c2">//</span><span class="c">使未登录用户的搜索结果包含加密文章的代码</span></span><span class="p">¶</span></div>
<div class="ln" style="top:174px">30</div>
<div class="cl" style="top:174px;left:51px;letter-spacing:0.040px"><span class="tx" id="T30"><span class="f">add_filter</span><span class="o">( </span><span class="s">'posts_search'</span><span class="o">, </span><span class="s">'include_password_posts_in_search'</span><span class="o"> );</span></span><span class="p">¶</span></div>
<div class="ln" style="top:193px">31</div>
<div class="cl" style="top:193px;left:51px;letter-spacing:0.122px"><span class="tx" id="T31"><span class="k">function</span><span class="n"> include_password_posts_in_search</span><span class="o">( </span><span class="k">$</span><span class="v">search</span><span class="o"> ) {</span></span><span class="p">¶</span></div>
<div class="ln" style="top:212px">32</div>
<div class="cl" style="top:212px;left:67px;letter-spacing:0.362px"><span class="tx" id="T32"><span class="k">global </span><span class="k">$</span><span class="v">wpdb</span><span class="o">;</span></span><span class="p">¶</span></div>
<div class="ln" style="top:231px">33</div>
<div class="cl" style="top:231px;left:67px;letter-spacing:-0.032px"><span class="tx" id="T33"><span class="k">if</span><span class="o">( !</span><span class="n">is_user_logged_in</span><span class="o">() ) {</span></span><span class="p">¶</span></div>
<div class="ln" style="top:250px">34</div>
<div class="cl" style="top:250px;left:84px;letter-spacing:0.426px"><span class="tx" id="T34"><span class="k">$</span><span class="v">pattern</span><span class="o"> = </span><span class="s">" AND ({$wpdb-&gt;prefix}posts.post_password = '')"</span><span class="o">;</span></span><span class="p">¶</span></div>
<div class="ln" style="top:269px">35</div>
<div class="cl" style="top:269px;left:84px;letter-spacing:0.152px"><span class="tx" id="T35"><span class="k">$</span><span class="v">search</span><span class="o"> = </span><span class="r">str_replace</span><span class="o">( </span><span class="k">$</span><span class="v">pattern</span><span class="o">, </span><span class="s">''</span><span class="o">, </span><span class="k">$</span><span class="v">search</span><span class="o"> );</span></span><span class="p">¶</span></div>
<div class="ln" style="top:288px">36</div>
<div class="cl" style="top:288px;left:67px;letter-spacing:1.547px"><span class="tx" id="T36"><span class="o">}</span></span><span class="p">¶</span></div>
<div class="ln" style="top:307px">37</div>
<div class="cl" style="top:307px;left:67px;letter-spacing:0.289px"><span class="tx" id="T37"><span class="k">return </span><span class="k">$</span><span class="v">search</span><span class="o">;</span></span><span class="p">¶</span></div>
<div class="ln" style="top:326px">38</div>
<div class="cl" style="top:326px;left:51px;letter-spacing:0.547px"><span class="tx" id="T38"><span class="o">}</span></span><span class="p">¶</span></div>
<div class="ln" style="top:345px">39</div>
<div class="cl" style="top:345px;left:51px;letter-spacing:0.000px"><span class="tx" id="T39"></span><span class="p">¶</span></div>
   <svg width="12" height="14" style="left:2px;top:194px"><path d="M0.5 0.5V12.5L6 6.5Z" fill="#000080"/></svg>
   <div class="fold" style="left:38px;top:197px"></div>
   <div class="fold" style="left:38px;top:235px"></div>
  </div>
  <div class="abs" style="left:573px;top:0;width:16px;height:356px;background:#f0f0f0">
   <div class="abs" style="left:0;top:0;width:16px;height:7px;background:#f0f0f0;border-right:1px solid #a0a0a0;border-bottom:2px solid #a0a0a0;border-top:1px solid #fff"></div>
   <div class="abs" style="left:0;top:37px;width:16px;height:17px;background:#cdcdcd"></div>
   <svg width="17" height="356" style="left:0;top:0"><path d="M4.500 18.500L8 15L11.500 18.500" fill="none" stroke="#606060" stroke-width="1.700"/><path d="M4.500 346L8 349.500L11.500 346" fill="none" stroke="#606060" stroke-width="1.700"/></svg>
  </div>
 </div>
 <div id="tabs">
  <svg width="16" height="17" style="left:4px;top:4px"><defs><linearGradient id="gfo" x1="0" y1="0" x2="1" y2="1"><stop offset="0" stop-color="#fbf0c0"/><stop offset="1" stop-color="#efc24c"/></linearGradient></defs><path d="M0.5 1.5H10.5V6.5H13.5V15.5H0.5Z" fill="url(#gfo)" stroke="#e3bf62" stroke-width="1"/><path d="M10.5 6.5H13.5V15.5H10.5Z" fill="#f3d069" opacity=".9"/></svg>
  <div class="abs" style="left:25px;top:2px;width:123px;height:23px;background:#c9e1f6;border:1px solid #9ecbf0"></div>
  <svg width="10" height="10" style="left:35px;top:9px"><path d="M4.5 0.5L8.5 4.5L4.5 8.5L0.5 4.5Z" fill="#3aa0c8" stroke="#1a3050" stroke-width="1"/><path d="M4.5 2.2L6.8 4.5L4.5 6.8Z" fill="#bfe6f5"/></svg>
  <span class="abs" style="left:46.500px;top:4px;font-size:13px;line-height:19px;white-space:pre;color:#111;letter-spacing:.05px">functions.php</span>
  <svg width="10" height="10" style="left:135px;top:9px"><path d="M1 1L8.5 8.5M8.5 1L1 8.5" stroke="#e887a8" stroke-width="2.2" fill="none"/><path d="M1.5 1.5L8 8M8 1.5L1.5 8" stroke="#fbe3ea" stroke-width=".8" fill="none"/></svg>
 </div>
 <div id="status">
  <span style="left:1.500px;letter-spacing:.1px">如需帮助<b style="font-weight:normal;display:inline-block;transform:translateX(3.5px)">，</b>请按键盘 F1 键</span><span style="left:176.500px;letter-spacing:.3px">行 31</span><span style="left:250px;letter-spacing:.3px">列 50</span><span style="left:322.500px">505</span><span style="left:379.500px">68</span><span style="left:435px">PC</span><span style="left:493px;letter-spacing:.2px">UTF-8</span><span style="right:22px;letter-spacing:.25px">19,943</span>
  <i class="ss" style="left:243.5px"></i><i class="ss" style="left:316.5px"></i><i class="ss" style="left:373.5px"></i><i class="ss" style="left:430.5px"></i><i class="ss" style="left:487.5px"></i><i class="ss" style="left:544.5px"></i><i class="ss" style="left:577.0px"></i><i class="ss" style="left:609.5px"></i><i class="ss" style="left:641.0px"></i><i class="ss" style="left:719.0px"></i><svg width="10" height="10" style="left:727px;top:8px"><path d="M7 1h2v2h-2zM4 4h2v2h-2zM7 4h2v2h-2zM1 7h2v2h-2zM4 7h2v2h-2zM7 7h2v2h-2z" fill="#bfbfbf"/></svg>
 </div>
 <div id="frame"></div>
</div>
</body></html>
